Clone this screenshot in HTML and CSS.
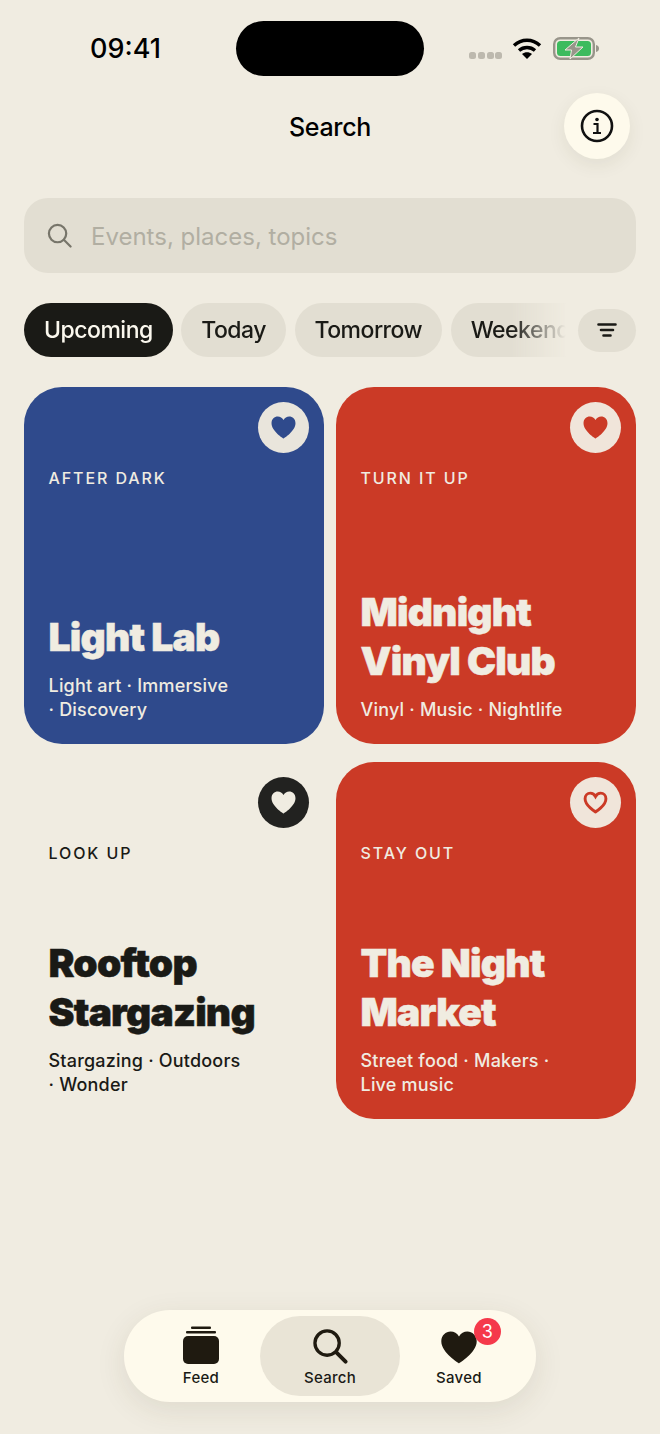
FILE: index.html
```html
<!DOCTYPE html>
<html lang="en">
<head>
  <meta charset="UTF-8">
  <title>Search</title>
  <link rel="stylesheet" href="styles.css">
</head>
<body>

  <div class="screen">

    <!-- Status bar -->
    <div class="status">
      <span class="time">09:41</span>
      <div class="island"></div>
      <div class="status-icons">
        <svg class="signal" width="33" height="7" viewBox="0 0 33 7"><g fill="#bdb9ae"><rect x="0" width="7" height="7" rx="2.5"/><rect x="9" width="7" height="7" rx="2.5"/><rect x="18" width="7" height="7" rx="2.5"/><rect x="26" width="7" height="7" rx="2.5"/></g></svg>
        <svg class="wifi" width="30" height="22" viewBox="0 0 30 22" fill="none" stroke="#000" stroke-width="3.4"><path d="M2 8.500C9.500 1.500 20.500 1.500 28 8.500"/><path d="M7 13.500C11.500 9.500 18.500 9.500 23 13.500"/><path d="M15 22l-5-5c3-2.400 7-2.400 10 0z" fill="#000" stroke="none"/></svg>
        <svg class="battery" width="46" height="23" viewBox="0 0 46 23"><rect x="1.200" y="1.200" width="39.600" height="20.600" rx="6" fill="none" stroke="#98958a" stroke-width="2.400"/><rect x="4" y="4" width="34" height="15" rx="3.500" fill="#3dbb5e"/><path d="M43 8c2 .4 3 1.800 3 3.500S45 14.600 43 15z" fill="#98958a"/><path d="M26 1L12 13h6.500L17 22l13-12h-7.500z" fill="#98958a" stroke="#f0ece1" stroke-width="1"/></svg>
      </div>
    </div>

    <!-- Title -->
    <header class="topbar">
      <span></span>
      <h1>Search</h1>
      <button class="info-btn">
        <svg width="34" height="34" viewBox="0 0 34 34" fill="none" stroke="#111" stroke-width="2.600"><circle cx="17" cy="17" r="15"/><path d="M13.500 15h4v9M13 24h8" stroke-width="2.200"/><circle cx="17" cy="10.500" r="1.800" fill="#111" stroke="none"/></svg>
      </button>
    </header>

    <!-- Search field -->
    <div class="searchbox">
      <svg width="25" height="25" viewBox="0 0 26 26" fill="none" stroke="#77756a" stroke-width="2.300" stroke-linecap="round"><circle cx="11" cy="11" r="9"/><path d="M17.500 17.500L24.500 24.500"/></svg>
      <span class="placeholder">Events, places, topics</span>
    </div>

    <!-- Filter chips -->
    <div class="filters">
      <div class="chips">
        <span class="chip active">Upcoming</span>
        <span class="chip">Today</span>
        <span class="chip">Tomorrow</span>
        <span class="chip">Weekend</span>
      </div>
      <button class="filter-btn">
        <svg width="20" height="14" viewBox="0 0 20 14" fill="none" stroke="#1a1a16" stroke-width="2.600" stroke-linecap="round"><path d="M1.500 1.500h17M4 7h12M6.500 12.500h7"/></svg>
      </button>
    </div>

    <!-- Cards -->
    <div class="grid">

      <article class="card blue">
        <button class="fav">
          <svg width="25" height="23" viewBox="0 0 24 22"><path class="heart" d="M12 21.500S.5 14.500.5 6.800C.5 3 3.400.5 6.500.5c2.300 0 4.300 1.200 5.500 3.300C13.200 1.700 15.200.5 17.500.5c3.100 0 6 2.500 6 6.300 0 7.700-11.500 14.700-11.500 14.700z"/></svg>
        </button>
        <div class="eyebrow">AFTER DARK</div>
        <h2>Light Lab</h2>
        <p>Light art · Immersive<br>· Discovery</p>
      </article>

      <article class="card red">
        <button class="fav">
          <svg width="25" height="23" viewBox="0 0 24 22"><path class="heart" d="M12 21.500S.5 14.500.5 6.800C.5 3 3.400.5 6.500.5c2.300 0 4.300 1.200 5.500 3.300C13.200 1.700 15.200.5 17.500.5c3.100 0 6 2.500 6 6.300 0 7.700-11.500 14.700-11.500 14.700z"/></svg>
        </button>
        <div class="eyebrow">TURN IT UP</div>
        <h2>Midnight<br>Vinyl Club</h2>
        <p>Vinyl · Music · Nightlife</p>
      </article>

      <article class="card plain">
        <button class="fav">
          <svg width="25" height="23" viewBox="0 0 24 22"><path class="heart" d="M12 21.500S.5 14.500.5 6.800C.5 3 3.400.5 6.500.5c2.300 0 4.300 1.200 5.500 3.300C13.200 1.700 15.200.5 17.500.5c3.100 0 6 2.500 6 6.300 0 7.700-11.500 14.700-11.500 14.700z"/></svg>
        </button>
        <div class="eyebrow">LOOK UP</div>
        <h2>Rooftop<br>Stargazing</h2>
        <p>Stargazing · Outdoors<br>· Wonder</p>
      </article>

      <article class="card red">
        <button class="fav">
          <svg width="25" height="23" viewBox="0 0 24 22"><path d="M12 20S2 14 2 7.300C2 4.200 4.300 2 7 2c2 0 3.900 1.100 5 3.200C13.100 3.100 15 2 17 2c2.700 0 5 2.200 5 5.300C22 14 12 20 12 20z" fill="none" stroke="#cb3a26" stroke-width="2.800"/></svg>
        </button>
        <div class="eyebrow">STAY OUT</div>
        <h2>The Night<br>Market</h2>
        <p>Street food · Makers ·<br>Live music</p>
      </article>

    </div>

    <!-- Tab bar -->
    <nav class="tabbar">
      <a class="tab">
        <svg width="36" height="38" viewBox="0 0 36 38" fill="#1f1a10"><rect x="8" y="0.500" width="20" height="2.500" rx="1"/><rect x="3" y="5" width="30" height="2.500" rx="1"/><rect x="0" y="10" width="36" height="28" rx="5"/></svg>
        <span>Feed</span>
      </a>
      <a class="tab current">
        <svg width="35" height="35" viewBox="0 0 36 36" fill="none" stroke="#1f1a10" stroke-width="3.400" stroke-linecap="round"><circle cx="14.500" cy="14.500" r="12.500"/><path d="M24 24l9.500 9.500" stroke-width="4"/></svg>
        <span>Search</span>
      </a>
      <a class="tab">
        <span class="tab-icon">
          <svg width="36" height="33" viewBox="0 0 24 22" fill="#1f1a10"><path d="M12 21.500S.2 14.500.2 6.800C.2 3 3.200.4 6.400.4c2.300 0 4.400 1.200 5.600 3.300C13.200 1.600 15.300.4 17.600.4c3.200 0 6.200 2.600 6.200 6.400 0 7.700-11.800 14.700-11.800 14.700z"/></svg>
          <b class="badge">3</b>
        </span>
        <span>Saved</span>
      </a>
    </nav>

  </div>

</body>
</html>
```

FILE: styles.css
```css
* {
  box-sizing: border-box;
}
body {
  margin: 0;
  background: #f0ece1;
  font-family: Inter, "Noto Sans", sans-serif;
  color: #1a1a16;
}
button {
  border: 0;
  padding: 0;
  font: inherit;
}
.screen {
  position: relative;
  width: 660px;
  height: 1434px;
  overflow: hidden;
}

/* status bar */
.status {
  display: grid;
  grid-template-columns: 236px 188px 236px;
  padding-top: 21px;
  height: 76px;
}
.time {
  text-align: center;
  font-size: 27px;
  font-weight: 500;
  line-height: 55px;
  color: #000;
  padding-left: 15px;
}
.island {
  height: 55px;
  background: #000;
  border-radius: 28px;
}
.status-icons {
  display: flex;
  align-items: flex-start;
  padding-left: 45px;
}
.signal {
  margin-top: 31px;
}
.wifi {
  margin: 16px 0 0 10px;
}
.battery {
  margin: 16px 0 0 11px;
}

/* title row */
.topbar {
  display: grid;
  grid-template-columns: 1fr auto 1fr;
  align-items: center;
  padding: 17px 30px 0;
}
h1 {
  margin: 2px 0 0;
  font-size: 25px;
  font-weight: 500;
  letter-spacing: -0.3px;
  color: #000;
}
.info-btn {
  justify-self: end;
  width: 66px;
  height: 66px;
  border-radius: 50%;
  background: #fefaec;
  box-shadow: 0 6px 18px rgba(70, 60, 30, 0.08);
  display: flex;
  align-items: center;
  justify-content: center;
}

/* search */
.searchbox {
  margin: 39px 24px 0;
  height: 75px;
  background: #e2ded2;
  border-radius: 24px;
  display: flex;
  align-items: center;
  gap: 19px;
  padding-left: 23px;
  font-size: 24px;
  color: #b1aea2;
}
.placeholder {
  margin-top: 2px;
}

/* chips */
.filters {
  display: flex;
  align-items: center;
  gap: 12px;
  margin: 30px 24px 0;
}
.chips {
  display: flex;
  gap: 8.5px;
  flex: 1;
  overflow: hidden;
  -webkit-mask-image: linear-gradient(to right, #000 90%, transparent 100%);
  mask-image: linear-gradient(to right, #000 90%, transparent 100%);
}
.chip {
  flex: none;
  height: 54px;
  line-height: 54px;
  padding: 0 20px;
  border-radius: 27px;
  background: #e2ded2;
  font-size: 23px;
  font-weight: 500;
  letter-spacing: -0.5px;
}
.chip.active {
  background: #1a1a16;
  color: #fbf8ee;
}
.filter-btn {
  flex: none;
  width: 58px;
  height: 43px;
  border-radius: 22px;
  background: #e2ded2;
  display: flex;
  align-items: center;
  justify-content: center;
}

/* cards */
.grid {
  display: grid;
  grid-template-columns: 300px 300px;
  column-gap: 12px;
  row-gap: 18px;
  margin: 30px 24px 0;
}
.card {
  position: relative;
  height: 357px;
  border-radius: 38px;
  padding: 81px 24px 22.5px 24.5px;
  display: flex;
  flex-direction: column;
  color: #f0ece1;
}
.card.blue {
  background: #2f4a8c;
}
.card.red {
  background: #cb3a26;
}
.card.plain {
  color: #1a1a16;
}
.fav {
  position: absolute;
  top: 15px;
  right: 15px;
  width: 51px;
  height: 51px;
  border-radius: 50%;
  background: #e9e5dc;
  display: flex;
  align-items: center;
  justify-content: center;
}
.red .fav {
  background: #f0e5da;
}
.plain .fav {
  background: #222220;
}
.blue .heart {
  fill: #2f4a8c;
}
.red .heart {
  fill: #cb3a26;
}
.plain .heart {
  fill: #f0ece1;
}
.eyebrow {
  font-size: 16px;
  font-weight: 500;
  letter-spacing: 1.9px;
  line-height: 20px;
}
.card h2 {
  margin: auto 0 0;
  font-size: 39px;
  font-weight: 900;
  letter-spacing: -0.8px;
  line-height: 49px;
  -webkit-text-stroke: 0.5px currentColor;
}
.card p {
  margin: 13px 0 0;
  font-size: 18px;
  font-weight: 500;
  letter-spacing: 0.2px;
  line-height: 24px;
}

/* tab bar */
.tabbar {
  position: absolute;
  left: 124px;
  bottom: 32px;
  width: 412px;
  height: 92px;
  border-radius: 46px;
  background: #fefaec;
  box-shadow: 0 8px 30px rgba(70, 60, 30, 0.1);
  display: grid;
  grid-template-columns: 118px 140px 118px;
  padding: 6px 18px;
}
.tab {
  display: flex;
  flex-direction: column;
  align-items: center;
  justify-content: flex-end;
  gap: 5px;
  border-radius: 40px;
  padding-bottom: 9px;
  font-size: 15px;
  font-weight: 500;
  letter-spacing: 0.3px;
  line-height: 18px;
}
.tab.current {
  background: #e9e4d6;
}
.tab-icon {
  position: relative;
  display: block;
  height: 36px;
}
.tab-icon svg {
  display: block;
  margin-top: 3px;
}
.badge {
  position: absolute;
  top: -10px;
  left: 33px;
  width: 27px;
  height: 27px;
  border-radius: 50%;
  background: #f5394b;
  color: #fff;
  font-size: 18px;
  font-weight: 400;
  line-height: 27px;
  text-align: center;
}
```
